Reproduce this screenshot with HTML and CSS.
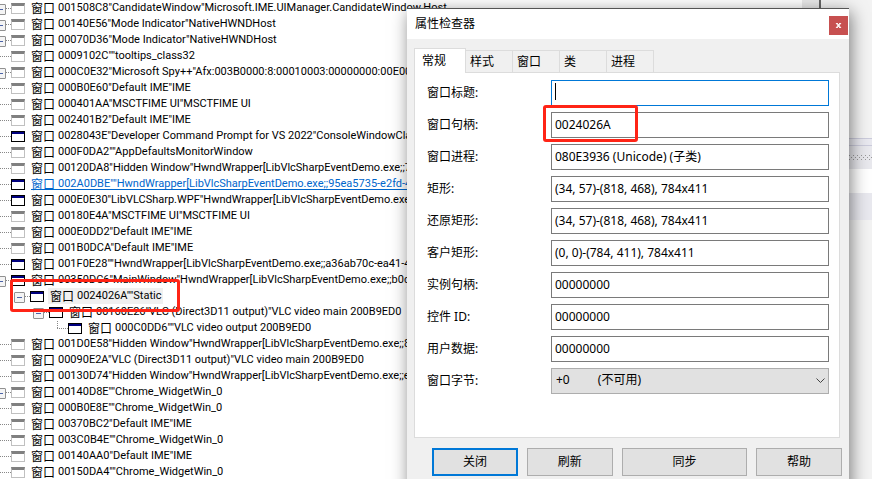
FILE: index.html
```html
<!DOCTYPE html>
<html lang="zh-CN">
<head>
<meta charset="utf-8">
<title>属性检查器</title>
<link rel="stylesheet" href="styles.css">
</head>
<body>
<main class="desktop">
<ul class="tree">
<li class="row open"><i class="branch"></i><i class="win"></i><span class="kind">窗口</span><span class="name">001508C8"CandidateWindow"Microsoft.IME.UIManager.CandidateWindow.Host</span></li>
<li class="row open"><i class="branch"></i><i class="win"></i><span class="kind">窗口</span><span class="name">00140E56"Mode Indicator"NativeHWNDHost</span></li>
<li class="row open"><i class="branch"></i><i class="win"></i><span class="kind">窗口</span><span class="name">00070D36"Mode Indicator"NativeHWNDHost</span></li>
<li class="row"><i class="branch"></i><i class="win"></i><span class="kind">窗口</span><span class="name">0009102C""tooltips_class32</span></li>
<li class="row open"><i class="branch"></i><i class="win"></i><span class="kind">窗口</span><span class="name">000C0E32"Microsoft Spy++"Afx:003B0000:8:00010003:00000000:00E00F</span></li>
<li class="row"><i class="branch"></i><i class="win"></i><span class="kind">窗口</span><span class="name">000B0E60"Default IME"IME</span></li>
<li class="row"><i class="branch"></i><i class="win"></i><span class="kind">窗口</span><span class="name">000401AA"MSCTFIME UI"MSCTFIME UI</span></li>
<li class="row"><i class="branch"></i><i class="win"></i><span class="kind">窗口</span><span class="name">002401B2"Default IME"IME</span></li>
<li class="row"><i class="branch"></i><i class="win shown"></i><span class="kind">窗口</span><span class="name">0028043E"Developer Command Prompt for VS 2022"ConsoleWindowClass</span></li>
<li class="row"><i class="branch"></i><i class="win"></i><span class="kind">窗口</span><span class="name">000F0DA2""AppDefaultsMonitorWindow</span></li>
<li class="row"><i class="branch"></i><i class="win"></i><span class="kind">窗口</span><span class="name">00120DA8"Hidden Window"HwndWrapper[LibVlcSharpEventDemo.exe;;7</span></li>
<li class="row"><i class="branch"></i><i class="win shown"></i><a class="link" href="#inspector"><span class="kind">窗口</span><span class="name">002A0DBE""HwndWrapper[LibVlcSharpEventDemo.exe;;95ea5735-e2fd-4</span></a></li>
<li class="row"><i class="branch"></i><i class="win shown"></i><span class="kind">窗口</span><span class="name">000E0E30"LibVLCSharp.WPF"HwndWrapper[LibVlcSharpEventDemo.exe</span></li>
<li class="row"><i class="branch"></i><i class="win"></i><span class="kind">窗口</span><span class="name">00180E4A"MSCTFIME UI"MSCTFIME UI</span></li>
<li class="row"><i class="branch"></i><i class="win"></i><span class="kind">窗口</span><span class="name">000E0DD2"Default IME"IME</span></li>
<li class="row"><i class="branch"></i><i class="win"></i><span class="kind">窗口</span><span class="name">001B0DCA"Default IME"IME</span></li>
<li class="row"><i class="branch"></i><i class="win shown"></i><span class="kind">窗口</span><span class="name">001F0E28""HwndWrapper[LibVlcSharpEventDemo.exe;;a36ab70c-ea41-4</span></li>
<li class="row open"><i class="branch"></i><i class="win shown"></i><span class="kind">窗口</span><span class="name">00350DC6"MainWindow"HwndWrapper[LibVlcSharpEventDemo.exe;;b0d</span></li>
<li class="row open level-1"><i class="branch"></i><i class="win shown"></i><span class="picked"><span class="kind">窗口</span><span class="name">0024026A""Static</span></span><i class="mark mark-row"></i></li>
<li class="row open level-2"><i class="branch"></i><i class="win shown"></i><span class="kind">窗口</span><span class="name">00160E26"VLC (Direct3D11 output)"VLC video main 200B9ED0</span></li>
<li class="row last level-3"><i class="branch"></i><i class="win shown"></i><span class="kind">窗口</span><span class="name">000C0DD6""VLC video output 200B9ED0</span></li>
<li class="row"><i class="branch"></i><i class="win"></i><span class="kind">窗口</span><span class="name">001D0E58"Hidden Window"HwndWrapper[LibVlcSharpEventDemo.exe;;8</span></li>
<li class="row"><i class="branch"></i><i class="win"></i><span class="kind">窗口</span><span class="name">00090E2A"VLC (Direct3D11 output)"VLC video main 200B9ED0</span></li>
<li class="row"><i class="branch"></i><i class="win"></i><span class="kind">窗口</span><span class="name">00130D74"Hidden Window"HwndWrapper[LibVlcSharpEventDemo.exe;;e</span></li>
<li class="row open"><i class="branch"></i><i class="win"></i><span class="kind">窗口</span><span class="name">00140D8E""Chrome_WidgetWin_0</span></li>
<li class="row"><i class="branch"></i><i class="win"></i><span class="kind">窗口</span><span class="name">000B0E8E""Chrome_WidgetWin_0</span></li>
<li class="row"><i class="branch"></i><i class="win"></i><span class="kind">窗口</span><span class="name">00370BC2"Default IME"IME</span></li>
<li class="row"><i class="branch"></i><i class="win"></i><span class="kind">窗口</span><span class="name">003C0B4E""Chrome_WidgetWin_0</span></li>
<li class="row"><i class="branch"></i><i class="win"></i><span class="kind">窗口</span><span class="name">00140AA0"Default IME"IME</span></li>
<li class="row"><i class="branch"></i><i class="win"></i><span class="kind">窗口</span><span class="name">00150DA4""Chrome_WidgetWin_0</span></li>
</ul>
<div class="scroll"></div>
<div class="side"><div class="side-top"></div><div class="side-line"></div><div class="side-grip"></div><div class="side-white"></div><div class="side-band"></div></div>

<section class="dialog" id="inspector" aria-labelledby="dialog-title">
<header class="titlebar"><h1 class="title" id="dialog-title">属性检查器</h1><button class="close" type="button" aria-label="关闭窗口"><svg width="7" height="7" viewBox="0 0 7 7"><path d="M1 1l4 5M2 1l4 5M5 1L1 6M6 1L2 6" fill="none" stroke="#fff"/></svg></button></header>
<div class="body">
<nav class="tabs" role="tablist">
<button class="tab active" type="button" role="tab" aria-selected="true">常规</button><button class="tab" type="button" role="tab">样式</button><button class="tab" type="button" role="tab">窗口</button><button class="tab" type="button" role="tab">类</button><button class="tab" type="button" role="tab">进程</button>
</nav>
<form class="panel">
<label class="label" for="f1">窗口标题:</label><div class="field"><input class="box focused" id="f1" type="text" value=""><i class="caret"></i></div>
<label class="label" for="f2">窗口句柄:</label><div class="field"><input class="box" id="f2" type="text" value="0024026A" readonly><i class="mark mark-field"></i></div>
<label class="label" for="f3">窗口进程:</label><div class="field"><input class="box" id="f3" type="text" value="080E3936 (Unicode) (子类)" readonly></div>
<label class="label" for="f4">矩形:</label><div class="field"><input class="box" id="f4" type="text" value="(34, 57)-(818, 468), 784x411" readonly></div>
<label class="label" for="f5">还原矩形:</label><div class="field"><input class="box" id="f5" type="text" value="(34, 57)-(818, 468), 784x411" readonly></div>
<label class="label" for="f6">客户矩形:</label><div class="field"><input class="box" id="f6" type="text" value="(0, 0)-(784, 411), 784x411" readonly></div>
<label class="label" for="f7">实例句柄:</label><div class="field"><input class="box" id="f7" type="text" value="00000000" readonly></div>
<label class="label" for="f8">控件 ID:</label><div class="field"><input class="box" id="f8" type="text" value="00000000" readonly></div>
<label class="label" for="f9">用户数据:</label><div class="field"><input class="box" id="f9" type="text" value="00000000" readonly></div>
<label class="label" for="f10">窗口字节:</label><div class="field"><select class="box combo" id="f10"><option>+0&nbsp;&nbsp;&nbsp;&nbsp;&nbsp;&nbsp;&nbsp;&nbsp;&nbsp;(不可用)</option></select><svg class="chevron" width="9" height="6" viewBox="0 0 9 6"><path d="M.5 .5l4 4 4-4" fill="none" stroke="#444"/></svg></div>
</form>
<footer class="actions"><button class="btn default" type="button">关闭</button><button class="btn" type="button">刷新</button><button class="btn wide" type="button">同步</button><button class="btn" type="button">帮助</button></footer>
</div>
</section>
</main>
</body>
</html>
```
FILE: styles.css
```css
* { box-sizing: border-box; }
body {
  margin: 0;
  overflow: hidden;
  background: #fff;
  color: #000;
  font: 12px/16px "Noto Sans", "Noto Sans CJK SC", sans-serif;
}
button, input, select { font: inherit; color: inherit; }
.desktop {
  position: relative;
  display: flex;
  height: 100vh;
  overflow: hidden;
}

/* Window tree */
.tree {
  flex: 1;
  min-width: 0;
  margin: 0;
  padding: 0;
  list-style: none;
  overflow: hidden;
}
.row {
  position: relative;
  display: flex;
  align-items: center;
  height: 16px;
  white-space: nowrap;
}
.level-1 { padding-left: 19px; }
.level-2 { padding-left: 38px; }
.level-3 { padding-left: 57px; }
.branch {
  position: relative;
  flex: none;
  width: 11px;
  height: 1px;
  background: repeating-linear-gradient(90deg, #888 0 1px, transparent 1px 2px);
}
.open .branch::before {
  content: "";
  position: absolute;
  left: -5px;
  top: -4px;
  width: 9px;
  height: 9px;
  border: 1px solid #919191;
  border-radius: 1px;
  background: linear-gradient(#4b63a7, #4b63a7) center / 5px 1px no-repeat, #f4f4f4;
}
.last .branch::before {
  content: "";
  position: absolute;
  left: 0;
  bottom: 0;
  width: 1px;
  height: 8px;
  background: repeating-linear-gradient(#888 0 1px, transparent 1px 2px);
}
.win {
  flex: none;
  width: 14px;
  height: 11px;
  margin-right: 6px;
  border: 1px solid #c0c0c0;
  border-top: 3px solid #808080;
  background: #fff;
}
.win.shown {
  border: 1px solid #000;
  background: linear-gradient(#000080 0 2px, #fff 2px);
}
.kind {
  flex: none;
  width: 27px;
  font-family: "Noto Sans CJK SC", sans-serif;
}
.name { font: 11px/16px Roboto, "Liberation Sans", sans-serif; }
.link {
  display: flex;
  color: #0066cc;
  text-decoration: none;
  background: linear-gradient(#0066cc, #0066cc) 0 13px / 100% 1px no-repeat;
}
.picked {
  display: flex;
  margin-left: -2px;
  padding: 0 2px;
  background: #f0f0f0;
}

/* Red highlights over the content */
.mark {
  position: absolute;
  z-index: 1;
  border: 3px solid #ff2416;
  border-radius: 3px;
  pointer-events: none;
}
.mark-row { left: 10px; top: -9px; width: 170px; height: 33px; }
.mark-field { left: -8px; top: -7px; width: 95px; height: 37px; }

/* Panes behind the dialog */
.scroll { width: 19px; background: #e9e9e9; border-right: 2px solid #666; }
.side { width: 51px; background: #f3f3f3; }
.side-top { height: 138px; }
.side-line { height: 8px; background: #e9e9f0; border: solid #ccccdc; border-width: 1px 0; }
.side-grip {
  height: 23px;
  background:
    linear-gradient(90deg, #999 1px, transparent 1px) 0 9px / 4px 1px repeat-x,
    linear-gradient(90deg, #999 1px, transparent 1px) 2px 11px / 4px 1px repeat-x,
    linear-gradient(90deg, #999 1px, transparent 1px) 0 13px / 4px 1px repeat-x,
    #e9e9ee;
}
.side-white { height: 24px; background: #fff; }
.side-band { height: 27px; background: #e9e9ef; }

/* Dialog */
.dialog {
  position: absolute;
  left: 407px;
  right: 23px;
  top: 8px;
  bottom: -20px;
  border-top: 1px solid #555;
  background: #f0f0f0;
  box-shadow: 2px 4px 16px rgba(0, 0, 0, .5);
}
.titlebar {
  display: flex;
  justify-content: space-between;
  padding: 7px 1px 4px 8px;
  background: #fff;
}
.title { margin: 0; font: inherit; }
.close {
  display: grid;
  place-items: center;
  width: 19px;
  height: 19px;
  padding: 0;
  border: 0;
  background: #c75050;
}
.body { padding: 9px 9px 0 7px; }
.tabs { display: flex; align-items: flex-end; }
.tab {
  min-width: 47px;
  height: 22px;
  padding: 0 4px;
  border: 1px solid #dcdcdc;
  border-width: 1px 1px 0 0;
  background: #f0f0f0;
  text-align: left;
}
.tab.active {
  position: relative;
  width: 52px;
  height: 25px;
  margin-bottom: -1px;
  padding: 0 7px;
  border-left-width: 1px;
  background: #fff;
}
.panel {
  display: grid;
  grid-template-columns: 124px 1fr;
  grid-auto-rows: 26px;
  row-gap: 6px;
  padding: 7px 10px 43px 12px;
  border: 1px solid #dcdcdc;
  background: #fff;
}
.label { padding-top: 5px; }
.field { position: relative; }
.box {
  display: block;
  width: 100%;
  height: 26px;
  padding: 0 3px 2px;
  border: 1px solid #7a7a7a;
  border-radius: 0;
  background: #fff;
  outline: 0;
}
.box.focused { border-color: #0078d7; }
.caret {
  position: absolute;
  left: 4px;
  top: 3px;
  width: 1px;
  height: 17px;
  background: #000;
}
.combo {
  appearance: none;
  padding: 0 4px 2px;
  border-color: #adadad;
  background: #e1e1e1;
}
.chevron { position: absolute; right: 4px; top: 10px; }
.actions {
  display: flex;
  gap: 9px;
  padding: 10px 0 0 18px;
  margin-right: -2px;
}
.btn {
  flex: 1 1 86px;
  height: 28px;
  padding: 0;
  border: 1px solid #adadad;
  background: #e1e1e1;
}
.btn.wide { flex-basis: 126px; }
.btn.default { border: 2px solid #0078d7; }
```
